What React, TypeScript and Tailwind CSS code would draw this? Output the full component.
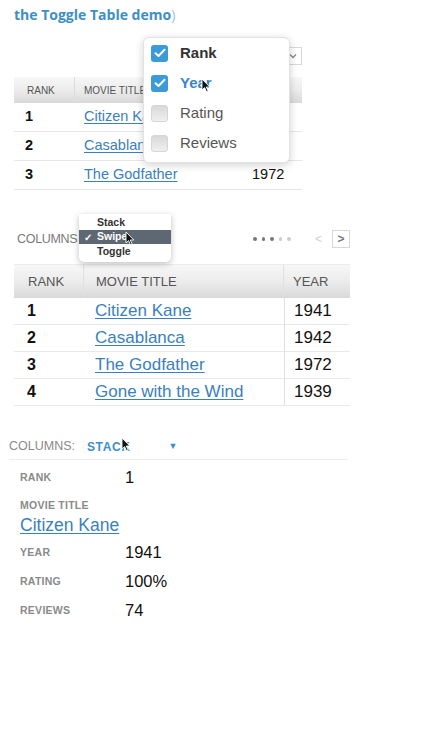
import React from "react";

// ── Small drawings ────────────────────────────────────────────────────────────
function Cursor({ className = "" }: { className?: string }) {
  return (
    <svg width="10" height="15" viewBox="0 0 10 15" className={className}>
      <path
        d="M1 1 L1 12 L3.6 9.6 L5.6 14 L7.2 13.3 L5.3 9 L8.8 9 Z"
        fill="#111"
        stroke="#fff"
        strokeWidth="0.9"
        strokeLinejoin="round"
      />
    </svg>
  );
}

function CheckBox({ checked }: { checked: boolean }) {
  if (!checked) {
    return (
      <span className="h-[17px] w-[17px] rounded-[3px] border border-[#d6d6d6] bg-gradient-to-b from-[#d9d9d9] to-[#efefef]" />
    );
  }
  return (
    <span className="flex h-[17px] w-[17px] items-center justify-center rounded-[3px] bg-[#3b9ad9]">
      <svg width="12" height="10" viewBox="0 0 12 10">
        <path d="M1.5 5.2 L4.5 8 L10.5 1.8" fill="none" stroke="#fff" strokeWidth="2" strokeLinecap="round" strokeLinejoin="round" />
      </svg>
    </span>
  );
}

const MOVIES = [
  { rank: 1, title: "Citizen Kane", year: 1941 },
  { rank: 2, title: "Casablanca", year: 1942 },
  { rank: 3, title: "The Godfather", year: 1972 },
  { rank: 4, title: "Gone with the Wind", year: 1939 },
];

const HEAD_BG = "bg-gradient-to-b from-[#f7f7f7] via-[#ececec] to-[#d9d9d9]";

// ── Demo 1: toggle popup ──────────────────────────────────────────────────────
function ToggleDemo() {
  const options = [
    { label: "Rank", checked: true, cls: "font-bold text-[#333]" },
    { label: "Year", checked: true, cls: "font-bold text-[#3a86c8]" },
    { label: "Rating", checked: false, cls: "text-[#555]" },
    { label: "Reviews", checked: false, cls: "text-[#555]" },
  ];
  return (
    <div className="relative ml-[14px] mt-[14px] w-[288px]">
      {/* toolbar */}
      <div className="flex h-[38px] items-start justify-end pt-[8px]">
        <span className="flex h-[18px] w-[18px] items-center justify-center border border-[#d8d8d8] bg-white">
          <svg width="8" height="6" viewBox="0 0 8 6">
            <path d="M1 1.5 L4 4.5 L7 1.5" fill="none" stroke="#888" strokeWidth="1.3" />
          </svg>
        </span>
      </div>
      {/* table */}
      <div className={`flex h-[26px] items-center text-[10px] text-[#555] ${HEAD_BG}`}>
        <div className="flex h-full w-[61px] items-center border-r border-[#dcdcdc] pl-[13px]">RANK</div>
        <div className="pl-[9px]">MOVIE TITLE</div>
      </div>
      {MOVIES.slice(0, 3).map((m) => (
        <div key={m.rank} className="flex h-[29px] items-center border-b border-[#e6e6e6] text-[14.5px]">
          <div className="w-[61px] pl-[11px] font-bold text-[#111]">{m.rank}</div>
          <div className="w-[177px] pl-[9px] text-[#3a7fc0] underline underline-offset-2">{m.title}</div>
          <div className="text-[#111]">{m.year}</div>
        </div>
      ))}
      {/* popup */}
      <div className="absolute left-[129px] top-[-2px] w-[147px] rounded-[6px] border border-[#e2e2e2] bg-white pb-[4px] shadow-[0_2px_8px_rgba(0,0,0,0.18)]">
        {options.map((o) => (
          <div key={o.label} className="relative flex h-[30px] items-center gap-[12px] pl-[7px] text-[15px]">
            <CheckBox checked={o.checked} />
            <span className={o.cls}>{o.label}</span>
            {o.label === "Year" && <Cursor className="absolute left-[57px] top-[10px]" />}
          </div>
        ))}
      </div>
    </div>
  );
}

// ── Demo 2: swipe table ───────────────────────────────────────────────────────
function SwipeDemo() {
  return (
    <div className="relative ml-[14px] mt-[24px] w-[336px]">
      {/* toolbar */}
      <div className="flex h-[51px] items-center justify-between border-b border-[#ececec]">
        <span className="pl-[3px] text-[12.5px] tracking-tight text-[#7a7a7a]">COLUMNS</span>
        <div className="flex items-center">
          <div className="flex items-center gap-[5px]">
            <span className="h-[3.5px] w-[3.5px] rounded-full bg-[#777]" />
            <span className="h-[3.5px] w-[3.5px] rounded-full bg-[#777]" />
            <span className="h-[3.5px] w-[3.5px] rounded-full bg-[#777]" />
            <span className="h-[3.5px] w-[3.5px] rounded-full bg-[#ccc]" />
            <span className="h-[3.5px] w-[3.5px] rounded-full bg-[#ccc]" />
          </div>
          <span className="ml-[24px] text-[12px] text-[#d0d0d0]">&lt;</span>
          <span className="ml-[10px] flex h-[18px] w-[18px] items-center justify-center border border-[#d8d8d8] text-[12px] font-bold text-[#777]">
            &gt;
          </span>
        </div>
      </div>
      {/* header */}
      <div className={`flex h-[33px] items-center text-[13px] text-[#555] ${HEAD_BG}`}>
        <div className="flex h-full w-[70px] items-center border-r border-[#e0e0e0] pl-[14px]">RANK</div>
        <div className="flex h-full w-[200px] items-center border-r border-[#e0e0e0] pl-[12px]">MOVIE TITLE</div>
        <div className="pl-[9px]">YEAR</div>
      </div>
      {MOVIES.map((m) => (
        <div key={m.rank} className="flex h-[27px] items-center border-b border-[#e8e8e8] text-[17px]">
          <div className="w-[70px] pl-[13px] text-[16px] font-bold text-[#111]">{m.rank}</div>
          <div className="w-[200px] pl-[11px] text-[#3a7fc0] underline underline-offset-2">{m.title}</div>
          <div className="flex h-full items-center border-l border-[#e0e0e0] pl-[9px] text-[#111]">{m.year}</div>
        </div>
      ))}
      {/* mode menu */}
      <div className="absolute left-[65px] top-[0px] w-[92px] rounded-b-[5px] bg-white pb-[3px] pt-[1px] text-[10.5px] font-semibold text-[#333] shadow-[0_2px_6px_rgba(0,0,0,0.25)]">
        <div className="h-[15px] pl-[18px] leading-[15px]">Stack</div>
        <div className="relative flex h-[14px] items-center bg-[#5d6873] text-white">
          <span className="w-[18px] pl-[5px] text-[10px]">✓</span>
          <span>Swipe</span>
          <Cursor className="absolute left-[46px] top-[1px]" />
        </div>
        <div className="h-[15px] pl-[18px] leading-[15px]">Toggle</div>
      </div>
    </div>
  );
}

// ── Demo 3: stacked view ──────────────────────────────────────────────────────
function StackField({ label, value }: { label: string; value: string }) {
  return (
    <div className="flex h-[29px] items-center">
      <span className="w-[105px] text-[10.5px] font-bold tracking-wide text-[#8a8a8a]">{label}</span>
      <span className="text-[16.5px] text-[#111]">{value}</span>
    </div>
  );
}

function StackDemo() {
  return (
    <div className="ml-[9px] mt-[30px] w-[339px]">
      <div className="flex h-[24px] items-center border-b border-[#ececec] pb-[2px]">
        <span className="text-[12.5px] text-[#8a8a8a]">COLUMNS:</span>
        <span className="relative ml-[12px] text-[12px] font-bold tracking-wider text-[#3b8fd0]">
          STACK
          <Cursor className="absolute left-[34px] top-[-1px]" />
        </span>
        <span className="ml-[38px] text-[9px] text-[#3b8fd0]">▼</span>
      </div>
      <div className="pl-[11px] pt-[3px]">
        <StackField label="RANK" value="1" />
        <div className="pt-[6px]">
          <div className="text-[10.5px] font-bold tracking-wide text-[#8a8a8a]">MOVIE TITLE</div>
          <div className="-mt-[2px] text-[17.5px] text-[#3a7fc0] underline underline-offset-2">Citizen Kane</div>
        </div>
        <StackField label="YEAR" value="1941" />
        <StackField label="RATING" value="100%" />
        <StackField label="REVIEWS" value="74" />
      </div>
    </div>
  );
}

export default function App() {
  return (
    <div className="h-[754px] w-[440px] overflow-hidden bg-white font-['Liberation_Sans',Arial,sans-serif]">
      <div className="pl-[14px] pt-[4px] font-['Open_Sans',sans-serif] text-[14px] text-[#3d8fc6]">
        <span className="font-bold">the Toggle Table demo</span>
        <span className="text-[#9cc4e0]">)</span>
      </div>
      <ToggleDemo />
      <SwipeDemo />
      <StackDemo />
    </div>
  );
}
